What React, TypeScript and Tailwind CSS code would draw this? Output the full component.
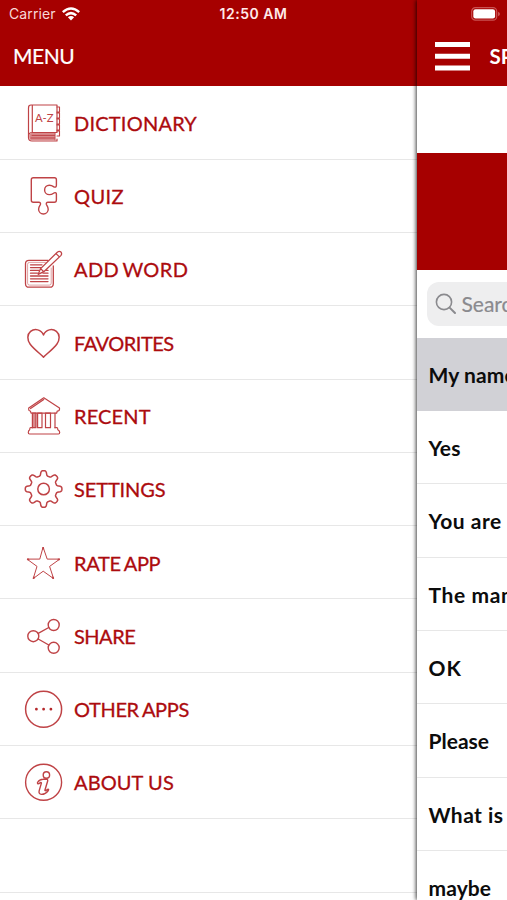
import type { ReactNode } from "react";

const gearPath = (() => {
  const points: string[] = [];
  for (let i = 0; i < 192; i++) {
    const a = (i / 192) * Math.PI * 2;
    const r = 15.9 + 2.5 * Math.tanh(2.2 * Math.cos(8 * a) - 0.2);
    points.push(`${(20.6 + r * Math.sin(a)).toFixed(2)} ${(20 - r * Math.cos(a)).toFixed(2)}`);
  }
  return `M${points.join("L")}Z`;
})();

function Icon({ children, width = 1.3 }: { children: ReactNode; width?: number }) {
  return (
    <svg viewBox="0 0 40 40" className="size-10 shrink-0" fill="none" stroke="#bf4346" strokeWidth={width} strokeLinecap="round" strokeLinejoin="round">
      {children}
    </svg>
  );
}

const DictionaryIcon = (
  <Icon width={1.2}>
    <path d="M34 29.5V2H8Q5.5 2 5.5 5V34.5Q5.5 38 9 38H34V36M34 29.5H9Q5.5 29.5 5.5 34M9.3 2V29.5" />
    <path d="M8 30H31.8V37.5H8Q6.2 37 6.2 34Q6.2 30.5 8 30Z" fill="#d98a8c" stroke="none" />
    <path d="M9 32.4H31.5M8 35H31.5M32 30V37" strokeWidth={1} />
    <path d="M34 4H36.5V9H34M34 10H36.5V15H34M34 16H36.5V21H34M34 22H36.5V27H34M34 28H36.5V33H34" strokeWidth={1.1} />
    <text x="11.9" y="19.2" fontSize="11" textLength="18.6" lengthAdjust="spacingAndGlyphs" fill="#bf4346" stroke="none" className="font-[Lato,sans-serif]">A-Z</text>
  </Icon>
);

const QuizIcon = (
  <Icon width={1.4}>
    <path d="M10.3 1.8H31.5Q33.4 1.8 33.4 3.8V9.3Q33.4 11.7 31.2 11C30.4 10.7 29.6 9.2 26.3 9.2A4.7 4.7 0 0 0 26.3 18.6C29.6 18.6 30.4 17.1 31.2 16.8Q33.4 16.1 33.4 18.3V24Q33.4 26.2 31.3 26.2H25Q22.8 26.2 23.4 28.5C23.8 29.7 25.2 30.8 25.2 33.2A4.8 4.8 0 0 1 15.6 33.2C15.6 30.8 17 29.7 17.4 28.5Q18 26.2 15.8 26.2H10.3Q8.3 26.2 8.3 24.2V3.8Q8.3 1.8 10.3 1.8Z" />
  </Icon>
);

const AddWordIcon = (
  <Icon>
    <path d="M25 11.3H6Q2.5 11.3 2.5 14.8V34.7Q2.5 38.2 6 38.2H26.8Q30.3 38.2 30.3 34.7V17" />
    <path d="M22.5 13.4H6.5Q4.6 13.4 4.6 15.3V34.2Q4.6 36.1 6.5 36.1H26.3Q28.2 36.1 28.2 34.2V19" strokeWidth={0.5} />
    <path d="M7.5 15.8H19M7.5 18.6H18M7.5 21.4H16M7.5 24.2H14.5M7.5 27H25M7.5 29.8H25M7.5 32.6H25M23 21.4H25M20 24.2H25" />
    <path d="M15.2 25.3L17.6 19.6L34.3 3.2Q36.3 1.6 38 3.1Q39.3 4.8 37.8 6.6L20.8 22.7ZM17.6 19.6L20.8 22.7M33 4.6L36.4 7.9" />
  </Icon>
);

const FavoritesIcon = (
  <Icon width={1.5}>
    <path d="M20.5 34.1C17 30.7 10.5 25.6 7.2 21.2C4 16.8 4 11.3 7.6 8.4C11.8 5 18.3 6.5 20.5 12C22.7 6.5 29.2 5 33.4 8.4C37 11.3 37 16.8 33.8 21.2C30.5 25.6 24 30.7 20.5 34.1Z" />
  </Icon>
);

const RecentIcon = (
  <Icon width={1.2}>
    <path d="M20.8 1.8L5.7 12V13.5Q5.7 15 7.3 15L8.2 17.2H33.6L34.3 15Q36.5 15 36.5 13.2V12ZM7.6 12.6L20.8 3.6" />
    <path d="M9.4 17.2H13V31.7H9.4Z" fill="#d98a8c" />
    <path d="M14.6 17.2H19V31.7H14.6ZM22.5 17.2H27.5V31.7H22.5ZM32 17.2V31.7" />
    <path d="M9.6 31.7H7.5Q6.7 31.7 6.7 33.7Q5.3 34.5 5.3 36.5Q5.3 38 6.5 38H35.5Q36.7 38 36.7 36.5Q36.7 34.5 34.8 33.7Q34.8 31.7 34 31.7H32" />
  </Icon>
);

const SettingsIcon = (
  <Icon width={1.5}>
    <path d={gearPath} />
    <circle cx="20.6" cy="20" r="5.8" />
  </Icon>
);

const RateIcon = (
  <Icon width={1}>
    <path d="M20.2 4.5L24.2 16.1H36.8L26.6 23.4L30.6 35.6L20.2 28.2L10.2 35.6L14 23.4L4 16.1H16.4Z" />
    <path d="M20.2 4.9V5.5M36 16.4H35.5M30.1 34.9L29.8 34.4M10.7 34.9L11 34.4M4.8 16.4H5.4" strokeWidth={1.9} />
  </Icon>
);

const ShareIcon = (
  <Icon width={1.4}>
    <circle cx="10.3" cy="20.2" r="5.5" />
    <circle cx="30.7" cy="9" r="5.5" />
    <circle cx="30.7" cy="31.8" r="5.5" />
    <path d="M15.2 17.4L25.8 11.5M15.2 23L25.8 29" />
  </Icon>
);

const OtherIcon = (
  <Icon width={1.5}>
    <circle cx="20.6" cy="20.2" r="18" />
    <path d="M13.4 20.2h.01M20.6 20.2h.01M27.9 20.2h.01" stroke="#b5282b" strokeWidth={2.8} />
  </Icon>
);

const AboutIcon = (
  <Icon width={1.4}>
    <circle cx="20.6" cy="20.2" r="18" />
    <circle cx="23.4" cy="13" r="3.2" />
    <path d="M14.5 20.5Q16.5 17.3 20 17.2L23.3 17Q25.2 17.3 24.6 19.3L21.9 28.2Q22.3 29.6 24.6 27.3Q26.2 26.8 25.3 28.5Q22.7 32.3 18.5 32.4Q15.3 32 16.2 28.6L18.4 21.1Q18.2 19.7 15.9 21.7Q14.3 22.2 14.5 20.5Z" />
  </Icon>
);

const menu = [
  { label: "DICTIONARY", icon: DictionaryIcon, tracking: "tracking-[0.22px]" },
  { label: "QUIZ", icon: QuizIcon, tracking: "tracking-[0.4px]" },
  { label: "ADD WORD", icon: AddWordIcon, tracking: "tracking-[0.4px] [word-spacing:-2px]" },
  { label: "FAVORITES", icon: FavoritesIcon, tracking: "tracking-[-0.5px]" },
  { label: "RECENT", icon: RecentIcon, tracking: "tracking-[0.15px]" },
  { label: "SETTINGS", icon: SettingsIcon, tracking: "tracking-[-0.1px]" },
  { label: "RATE APP", icon: RateIcon, tracking: "tracking-[-0.35px] [word-spacing:-1px]" },
  { label: "SHARE", icon: ShareIcon, tracking: "tracking-[-0.5px]" },
  { label: "OTHER APPS", icon: OtherIcon, tracking: "tracking-[-0.35px] [word-spacing:-1px]" },
  { label: "ABOUT US", icon: AboutIcon, tracking: "tracking-[0.1px]" },
];

const phrases = [
  { text: "My name is", tracking: "tracking-[0.1px]" },
  { text: "Yes", tracking: "tracking-[0.1px]" },
  { text: "You are", tracking: "tracking-[0.5px]" },
  { text: "The man", tracking: "tracking-[0.6px]" },
  { text: "OK", tracking: "tracking-[1px]" },
  { text: "Please", tracking: "tracking-normal" },
  { text: "What is", tracking: "tracking-[0.45px]" },
  { text: "maybe", tracking: "tracking-[0.1px]" },
];

function StatusBar() {
  return (
    <div className="absolute inset-x-0 top-0 z-20 grid h-[27px] grid-cols-3 items-center pr-[6px] pl-[9px] font-[Inter,sans-serif] text-white">
      <div className="flex items-center gap-[6px]">
        <span className="text-[14px] leading-[27px] tracking-[0.1px] text-[#f8d8d8]">Carrier</span>
        <svg viewBox="0 0 18 14" className="h-[14px] w-[18px]" fill="none" stroke="white" strokeWidth="2.5">
          <path d="M0.8 5.1Q9 -2.1 17.2 5.1M3.8 8.4Q9 3.9 14.2 8.4" />
          <path d="M5.9 10.2Q9 7.6 12.1 10.2L9 13.6Z" fill="white" stroke="none" />
        </svg>
      </div>
      <span className="-ml-[3px] text-center text-[14px] font-semibold tracking-[0.5px] whitespace-nowrap text-[#ffeaea]">12:50 AM</span>
      <svg viewBox="0 0 30 14" className="h-[14px] w-[30px] justify-self-end">
        <rect x="0.7" y="0.7" width="25" height="12.4" rx="3.7" fill="none" stroke="#c95252" strokeWidth="1.2" />
        <rect x="2.3" y="2.3" width="21.8" height="9.2" rx="2.2" fill="white" />
        <path d="M27 4.8Q29 5.6 29 7T27 9.2Z" fill="#c95252" />
      </svg>
    </div>
  );
}

export default function App() {
  return (
    <div className="relative flex h-[900px] w-full overflow-hidden bg-white font-[Lato,sans-serif]">
      <StatusBar />
      <nav className="flex w-[416.5px] shrink-0 flex-col">
        <header className="h-[86.4px] shrink-0 bg-[#a60000] pt-[42px] pl-[13px] text-[21px] leading-[28px] tracking-[-0.45px] text-white [-webkit-text-stroke:0.2px_white]">MENU</header>
        {menu.map((item) => (
          <div key={item.label} className="flex h-[73.3px] shrink-0 items-center gap-[11px] border-b border-[#e7e7e7] pt-[0.5px] pl-[23px]">
            {item.icon}
            <span className={`text-[20px] leading-7 whitespace-nowrap text-[#ac0b0e] [-webkit-text-stroke:0.3px_#ac0b0e] ${item.tracking}`}>{item.label}</span>
          </div>
        ))}
        <div className="h-[73.3px] shrink-0 border-b border-[#e7e7e7]" />
      </nav>
      <main className="z-10 flex min-w-0 flex-1 flex-col bg-white shadow-[-1px_0_4px_rgba(0,0,0,0.75)]">
        <header className="flex h-[86.4px] shrink-0 gap-[19.5px] bg-[#a60000] pt-[42px] pl-[18.5px] text-white">
          <svg viewBox="0 0 35 29" className="h-[29px] w-[35px] shrink-0" fill="white">
            <path d="M0 0h35v5H0zM0 11.7h35v5H0zM0 23.5h35v5H0z" />
          </svg>
          <span className="w-[18px] text-[20.5px] leading-[28px] font-bold">SPANISH</span>
        </header>
        <div className="h-[66.2px] shrink-0" />
        <div className="h-[117.3px] shrink-0 bg-[#a60000]" />
        <div className="h-[68px] shrink-0 overflow-hidden pt-[12px] pl-[10px]">
          <div className="flex h-[44px] w-[300px] items-center gap-[5px] rounded-[12px] bg-[#eeeeef] pl-[8px] text-[#8a8a8e]">
            <svg viewBox="0 0 22 22" className="size-[22px]" fill="none" stroke="currentColor" strokeWidth="1.6" strokeLinecap="round">
              <circle cx="9" cy="9" r="7.6" />
              <path d="M14.6 14.6L20 20" strokeWidth="2" />
            </svg>
            <span className="text-[21px] [-webkit-text-stroke:0.2px_#8a8a8e]">Search</span>
          </div>
        </div>
        {phrases.map((p, i) => (
          <div key={p.text} className={`flex h-[73.3px] shrink-0 items-center overflow-hidden border-b pt-px pl-[12px] ${i === 0 ? "border-[#d1d1d6] bg-[#d1d1d6]" : "border-[#e7e7e7]"}`}>
            <span className={`text-[21px] font-bold whitespace-nowrap text-[#0c0c0c] ${p.tracking}`}>{p.text}</span>
          </div>
        ))}
      </main>
    </div>
  );
}
